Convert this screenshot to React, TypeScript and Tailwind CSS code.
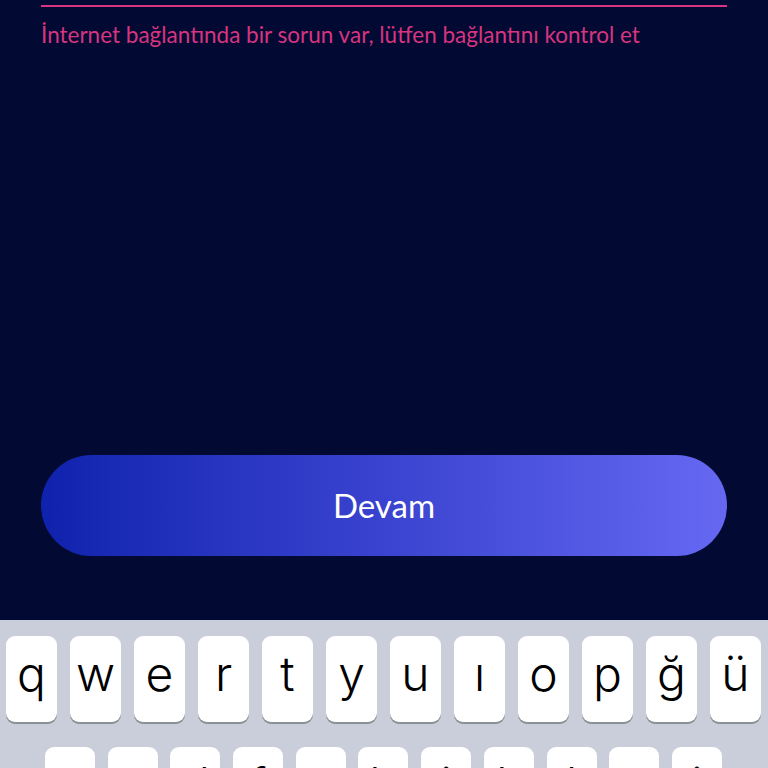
import React from 'react';

const row1 = ['q', 'w', 'e', 'r', 't', 'y', 'u', 'ı', 'o', 'p', 'ğ', 'ü'];
const row2 = ['a', 's', 'd', 'f', 'g', 'h', 'j', 'k', 'l', 'ş', 'i'];

function Key({ label, width }: { label: string; width: string }) {
    return (
        <div
            className={`${width} h-[86px] shrink-0 rounded-[9px] bg-white shadow-[0_2px_0_#8b8f98] flex items-center justify-center text-[48px] font-light text-black leading-none pb-[10px]`}
            style={{ fontFamily: 'Inter, "Noto Sans", sans-serif' }}
        >
            {label}
        </div>
    );
}

export default function App() {
    return (
        <div className="w-[768px] h-[768px] overflow-hidden flex flex-col bg-[#020a34]">
            {/* Form area */}
            <div className="h-[620px] shrink-0 flex flex-col px-[41px]">
                <div className="mt-[5px] h-[2px] bg-[#d8347f]" />
                <p
                    className="mt-[14px] text-[22.5px] leading-[28px] text-[#d8347f]"
                    style={{ fontFamily: 'Lato, "Noto Sans", sans-serif' }}
                >
                    İnternet bağlantında bir sorun var, lütfen bağlantını kontrol et
                </p>

                <button
                    className="mt-auto mb-[64px] h-[101px] w-full rounded-full bg-gradient-to-r from-[#0f22ad] via-[#3a43cf] to-[#6668f2] text-white text-[33px]"
                    style={{ fontFamily: 'Lato, "Noto Sans", sans-serif' }}
                >
                    Devam
                </button>
            </div>

            {/* Keyboard */}
            <div className="h-[148px] shrink-0 overflow-hidden bg-[#cacedb] pt-[16px] flex flex-col gap-[25px]">
                <div className="flex gap-[13px] pl-[6px]">
                    {row1.map(k => (
                        <Key key={k} label={k} width="w-[51px]" />
                    ))}
                </div>
                <div className="flex justify-between pl-[45px] pr-[46px]">
                    {row2.map(k => (
                        <Key key={k} label={k} width="w-[50px]" />
                    ))}
                </div>
            </div>
        </div>
    );
}
